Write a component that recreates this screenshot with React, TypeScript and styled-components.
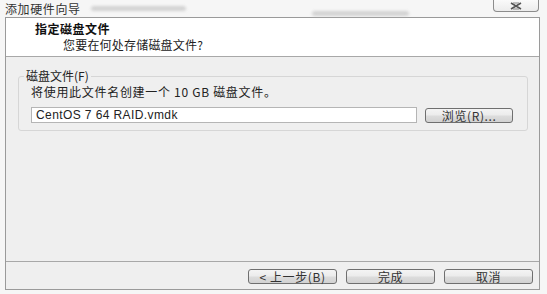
import React from "react";
import styled, { createGlobalStyle } from "styled-components";

const GlobalStyle = createGlobalStyle`
  html, body {
    margin: 0;
    padding: 0;
    background: #f6f6f6;
  }
  body {
    font-family: "Noto Sans CJK SC", "Liberation Sans", sans-serif;
    color: #222;
  }
  * {
    box-sizing: border-box;
  }
`;

const Page = styled.div`
  width: 547px;
  height: 294px;
  display: flex;
  flex-direction: column;
  overflow: hidden;
`;

const TitleBar = styled.div`
  height: 17px;
  flex-shrink: 0;
  display: flex;
  align-items: flex-start;
  padding-left: 5px;
  padding-right: 8px;
`;

const TitleText = styled.span`
  font-size: 12px;
  line-height: 15px;
  padding-top: 1px;
  color: #333;
  letter-spacing: 0.6px;
  white-space: nowrap;
`;

const Blurred = styled.span<{ $top: number; $left: number; $width: number }>`
  display: block;
  margin-top: ${(p) => p.$top}px;
  margin-left: ${(p) => p.$left}px;
  width: ${(p) => p.$width}px;
  height: 5px;
  border-radius: 3px;
  background: #c4c4c4;
  filter: blur(1.8px);
  opacity: 0.7;
`;

const CloseButton = styled.div`
  margin-left: auto;
  width: 46px;
  height: 12px;
  border: 1px solid #8c8c8c;
  border-top: none;
  border-radius: 0 0 4px 4px;
  background: linear-gradient(#fafafa, #ececec);
  display: flex;
  align-items: center;
  justify-content: center;
`;

const Frame = styled.div`
  margin: 0 7px 0 5px;
  height: 273px;
  border: 1px solid #9a9a9a;
  display: flex;
  flex-direction: column;
  background: #efefef;
`;

const Header = styled.div`
  height: 39px;
  flex-shrink: 0;
  background: #fff;
  border-bottom: 1px solid #a8a8a8;
  padding: 3px 0 0 29px;
`;

const HeaderTitle = styled.div`
  font-size: 12px;
  line-height: 16px;
  font-weight: bold;
  color: #111;
  letter-spacing: 0.5px;
`;

const HeaderSub = styled.div`
  font-size: 12px;
  line-height: 15px;
  padding-left: 28px;
  color: #222;
  letter-spacing: 0.2px;
`;

const Body = styled.div`
  flex: 1;
  padding: 19px 11px 0 12px;
`;

const GroupBox = styled.div`
  border: 1px solid #d6d6d6;
  border-radius: 3px;
  padding: 0 14px 7px 12px;
`;

const GroupLabel = styled.div`
  width: fit-content;
  margin: -8px 0 0 -7px;
  padding: 0 2px;
  background: #efefef;
  font-size: 12px;
  line-height: 14px;
  color: #222;
`;

const Hint = styled.div`
  font-size: 12px;
  line-height: 15px;
  margin-top: 1px;
  color: #222;
  letter-spacing: 0.7px;
`;

const FileRow = styled.div`
  display: flex;
  align-items: center;
  gap: 8px;
  margin-top: 8px;
`;

const FileInput = styled.div`
  width: 387px;
  height: 16px;
  border: 1px solid #b5b5b5;
  background: #fff;
  font-family: "Liberation Sans", sans-serif;
  font-size: 12px;
  line-height: 14px;
  padding-left: 4px;
  letter-spacing: 0.4px;
  color: #222;
`;

const Button = styled.div<{ $width: number }>`
  width: ${(p) => p.$width}px;
  height: 15px;
  border: 1px solid #6f6f6f;
  border-radius: 3px;
  background: linear-gradient(#f4f4f4 0%, #ececec 45%, #dcdcdc 55%, #d2d2d2 100%);
  display: flex;
  align-items: center;
  justify-content: center;
  font-size: 12px;
  line-height: 13px;
  color: #333;
  letter-spacing: 0.6px;
`;

const Footer = styled.div`
  height: 28px;
  flex-shrink: 0;
  border-top: 1px solid #a8a8a8;
  display: flex;
  justify-content: flex-end;
  gap: 9px;
  padding: 7px 6px 0 0;
`;

const App = () => {
  return (
    <Page>
      <GlobalStyle />
      <TitleBar>
        <TitleText>添加硬件向导</TitleText>
        <Blurred $top={6} $left={10} $width={95} />
        <Blurred $top={11} $left={126} $width={97} />
        <CloseButton>
          <svg width="14" height="8" viewBox="0 0 14 8">
            <path d="M2 1 L12 7 M12 1 L2 7" stroke="#555" strokeWidth="1.6" />
            <path d="M4 1 L10 1 M4 7 L10 7" stroke="#888" strokeWidth="1" />
          </svg>
        </CloseButton>
      </TitleBar>
      <Frame>
        <Header>
          <HeaderTitle>指定磁盘文件</HeaderTitle>
          <HeaderSub>您要在何处存储磁盘文件?</HeaderSub>
        </Header>
        <Body>
          <GroupBox>
            <GroupLabel>磁盘文件(F)</GroupLabel>
            <Hint>将使用此文件名创建一个 10 GB 磁盘文件。</Hint>
            <FileRow>
              <FileInput>CentOS 7 64 RAID.vmdk</FileInput>
              <Button $width={88}>浏览(R)...</Button>
            </FileRow>
          </GroupBox>
        </Body>
        <Footer>
          <Button $width={89}>&lt; 上一步(B)</Button>
          <Button $width={89}>完成</Button>
          <Button $width={89}>取消</Button>
        </Footer>
      </Frame>
    </Page>
  );
};

export default App;
